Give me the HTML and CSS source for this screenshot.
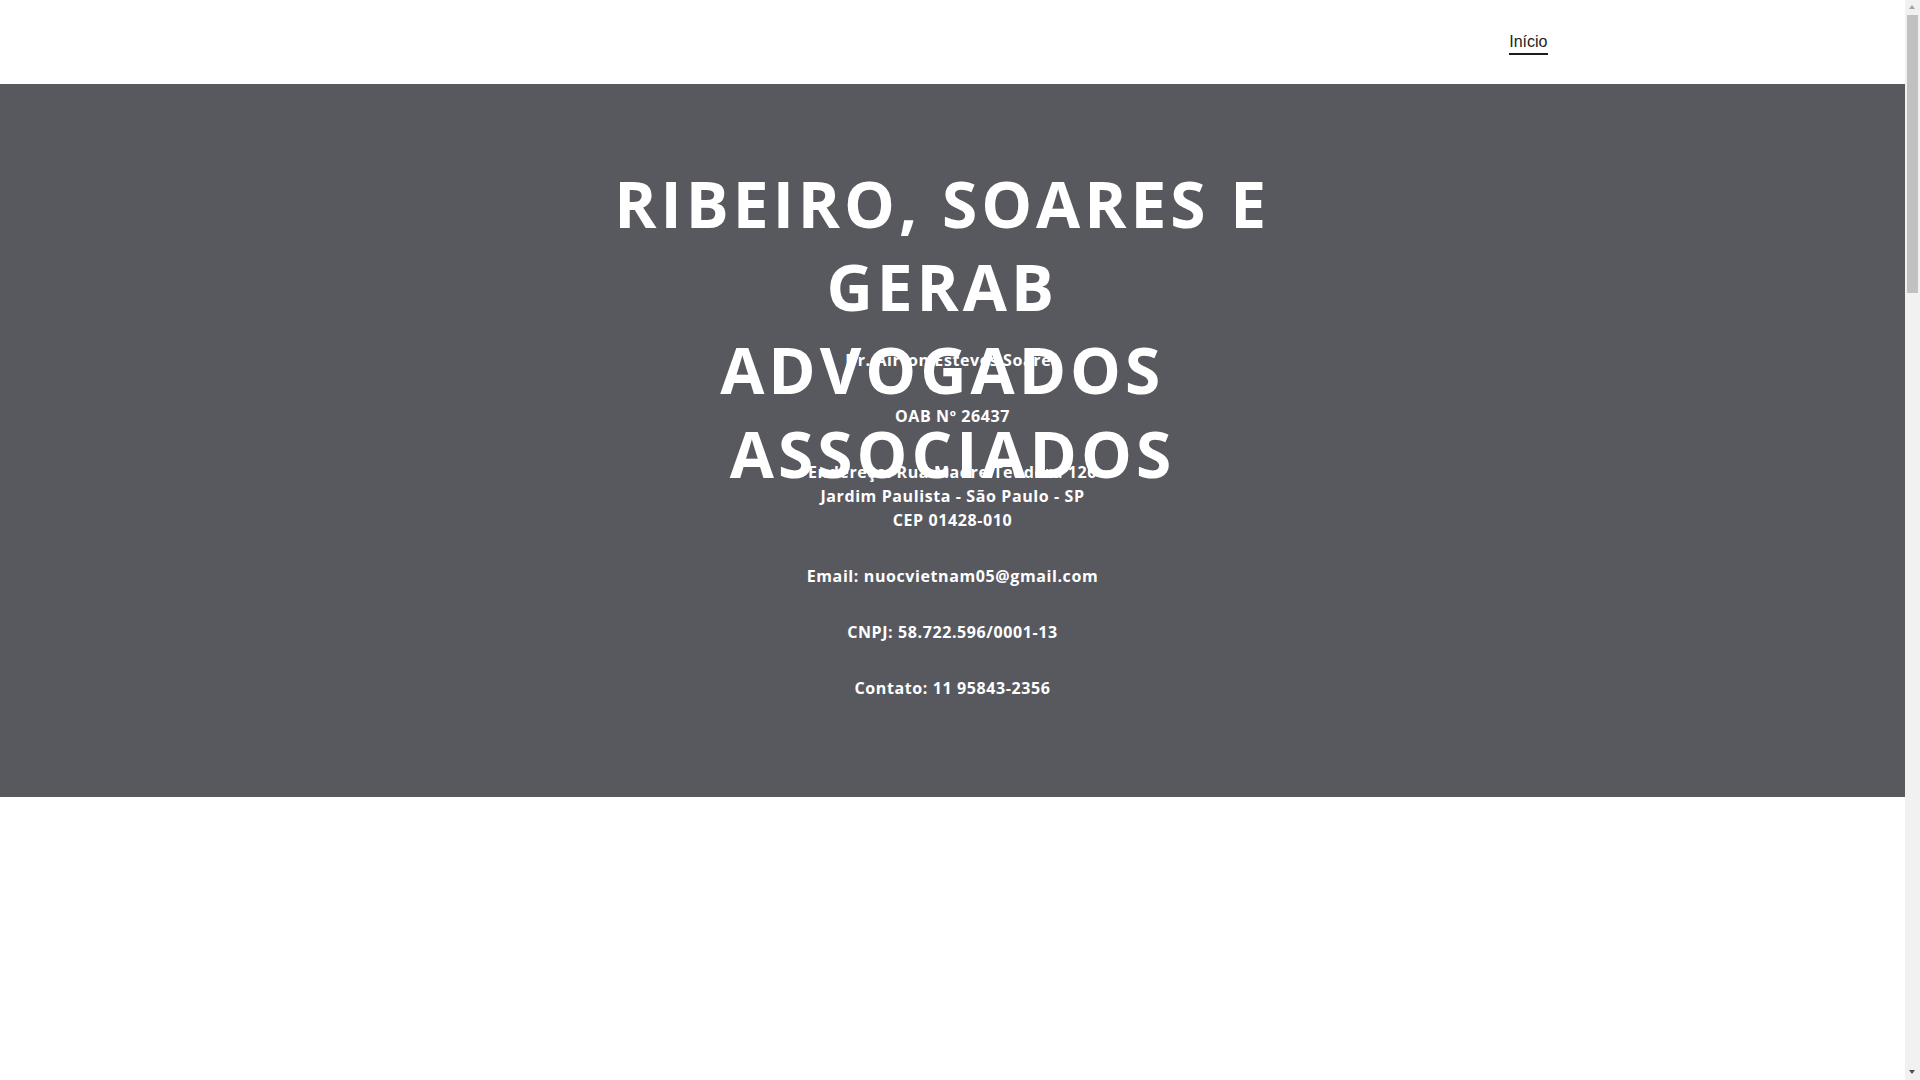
FILE: index.html
```html
<!DOCTYPE html>
<html lang="pt-BR">
<head>
<meta charset="utf-8">
<title>Ribeiro, Soares e Gerab Advogados Associados</title>
<link rel="stylesheet" href="styles.css">
</head>
<body>
<div class="page">
  <header class="site-header">
    <div class="header-inner">
      <nav class="main-nav">
        <a class="nav-link" href="#">Início</a>
      </nav>
    </div>
  </header>
  <section class="hero">
    <div class="hero-title-wrap">
      <h1 class="hero-title">RIBEIRO, SOARES E&nbsp;<br>GERAB&nbsp;<br>ADVOGADOS&nbsp;<br>ASSOCIADOS</h1>
    </div>
    <div class="hero-info">
      <p>Dr. Airton Esteves Soares</p>
      <p>OAB Nº 26437</p>
      <p>Endereço: Rua Madre Teodora 126<br>Jardim Paulista - São Paulo - SP<br>CEP 01428-010</p>
      <p>Email: nuocvietnam05@gmail.com</p>
      <p>CNPJ: 58.722.596/0001-13</p>
      <p>Contato: 11 95843-2356</p>
    </div>
  </section>
  <main class="page-rest"></main>
</div>
<div class="scrollbar" aria-hidden="true">
  <span class="sb-arrow sb-up"></span>
  <span class="sb-thumb"></span>
  <span class="sb-arrow sb-down"></span>
</div>
</body>
</html>
```
FILE: styles.css
```css
html, body {
  margin: 0;
  padding: 0;
}
body {
  background: #ffffff;
  font-family: "Open Sans", "Liberation Sans", sans-serif;
}
.page {
  margin-right: 15px;
}
.site-header {
  height: 84px;
  box-sizing: border-box;
  background: #ffffff;
}
.header-inner {
  max-width: 1190px;
  margin: 0 auto;
  padding-top: 32px;
  display: flex;
  justify-content: flex-end;
}
.main-nav {
  display: flex;
}
.nav-link {
  font-family: "Liberation Sans", Arial, sans-serif;
  font-size: 16px;
  line-height: 19px;
  color: #1c1c1c;
  text-decoration: none;
  padding-bottom: 2px;
  border-bottom: 2px solid #1c1c1c;
}
.hero {
  background: #58595f;
  color: #ffffff;
  padding: 78px 0 97px;
  text-align: center;
}
.hero-title-wrap {
  height: 186px;
}
.hero-title {
  margin: 0;
  font-family: "Open Sans", "Liberation Sans", sans-serif;
  font-weight: 700;
  font-size: 64px;
  line-height: 83.2px;
  letter-spacing: 4px;
  color: #ffffff;
}
.hero-info p {
  margin: 0 0 32px;
  font-size: 16px;
  line-height: 24px;
  font-weight: 700;
  letter-spacing: 0.6px;
}
.hero-info p:last-child {
  margin-bottom: 0;
}
.page-rest {
  display: block;
  min-height: 3280px;
}
.scrollbar {
  position: fixed;
  top: 0;
  right: 0;
  width: 15px;
  height: 100vh;
  background: #f1f1f1;
}
.sb-arrow {
  position: absolute;
  left: 4px;
  width: 0;
  height: 0;
  border-left: 3.5px solid transparent;
  border-right: 3.5px solid transparent;
}
.sb-up {
  top: 5px;
  border-bottom: 4px solid #a3a3a3;
}
.sb-down {
  bottom: 6px;
  border-top: 4px solid #505050;
}
.sb-thumb {
  position: absolute;
  top: 15px;
  left: 2px;
  width: 11px;
  height: 278px;
  background: #c1c1c1;
}
```
